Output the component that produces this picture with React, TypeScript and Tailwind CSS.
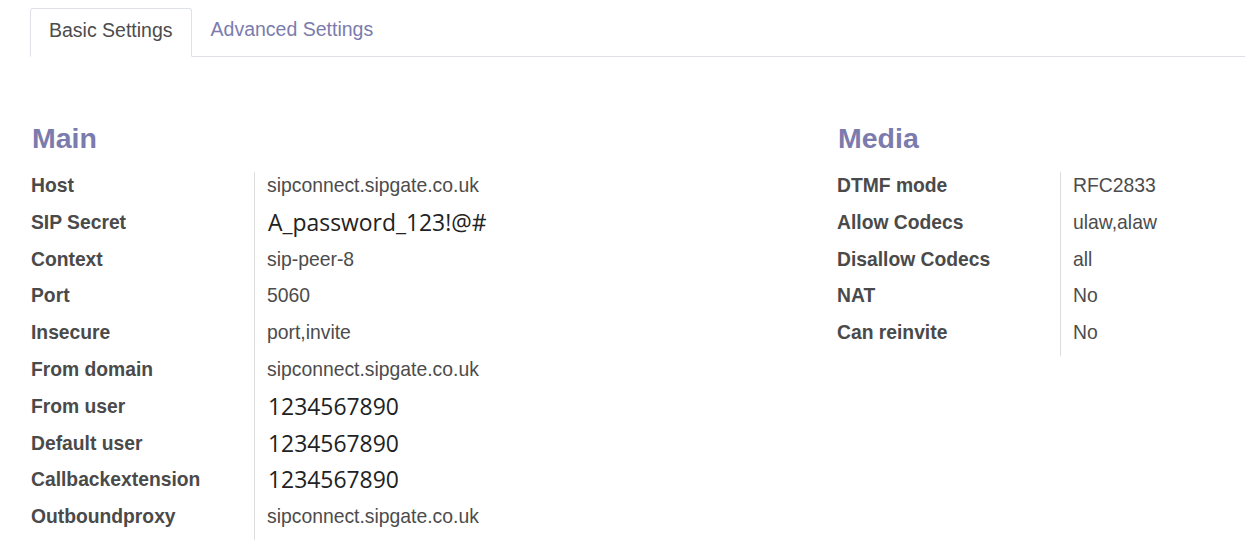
import React from "react";

const sans = { fontFamily: '"Liberation Sans", Arial, sans-serif' };

type Row = { label: string; value: string; big?: boolean };

const main: Row[] = [
  { label: "Host", value: "sipconnect.sipgate.co.uk" },
  { label: "SIP Secret", value: "A_password_123!@#", big: true },
  { label: "Context", value: "sip-peer-8" },
  { label: "Port", value: "5060" },
  { label: "Insecure", value: "port,invite" },
  { label: "From domain", value: "sipconnect.sipgate.co.uk" },
  { label: "From user", value: "1234567890", big: true },
  { label: "Default user", value: "1234567890", big: true },
  { label: "Callbackextension", value: "1234567890", big: true },
  { label: "Outboundproxy", value: "sipconnect.sipgate.co.uk" },
];

const media: Row[] = [
  { label: "DTMF mode", value: "RFC2833" },
  { label: "Allow Codecs", value: "ulaw,alaw" },
  { label: "Disallow Codecs", value: "all" },
  { label: "NAT", value: "No" },
  { label: "Can reinvite", value: "No" },
];

function Section({ title, rows, width }: { title: string; rows: Row[]; width: string }) {
  return (
    <div className={`${width} shrink-0`}>
      <h2 className="text-[28.5px] font-bold leading-[35px] text-[#7c7bad] pl-[1px] mb-[16px]">{title}</h2>
      <div className="grid grid-cols-[223px_1fr]">
        <div className="flex flex-col">
          {rows.map((r) => (
            <div key={r.label} className="h-[36.8px] leading-[27px] text-[19.3px] font-bold text-[#4a4a4a] whitespace-nowrap">
              {r.label}
            </div>
          ))}
        </div>
        <div className="flex flex-col border-l border-[#dcdcdc] pl-[12px]">
          {rows.map((r, i) =>
            r.big ? (
              <div
                key={i}
                className="h-[36.8px] leading-[27px] text-[22.9px] text-[#222] whitespace-nowrap pl-[1px]"
                style={{ fontFamily: '"Open Sans", "Noto Sans", sans-serif' }}
              >
                {r.value}
              </div>
            ) : (
              <div key={i} className="h-[36.8px] leading-[27px] text-[19.35px] text-[#4c4c4c] whitespace-nowrap">
                {r.value}
              </div>
            )
          )}
        </div>
      </div>
    </div>
  );
}

export default function App() {
  return (
    <div className="w-[1245px] h-[541px] overflow-hidden bg-white" style={sans}>
      <div className="pl-[30px] pt-[8px]">
        <div className="flex border-b border-[#dee2e6]">
          <div className="h-[49px] -mb-[1px] px-[18px] pb-[4px] flex items-center border border-[#dee2e6] border-b-white bg-white rounded-t-[3px] text-[19.5px] text-[#4c4c4c]">
            Basic Settings
          </div>
          <div className="h-[48px] px-[19px] pb-[4px] flex items-center text-[19.5px] text-[#7c7bad]">
            Advanced Settings
          </div>
        </div>
      </div>
      <div className="flex pl-[31px] pt-[64px]">
        <Section title="Main" rows={main} width="w-[806px]" />
        <Section title="Media" rows={media} width="w-[500px]" />
      </div>
    </div>
  );
}
